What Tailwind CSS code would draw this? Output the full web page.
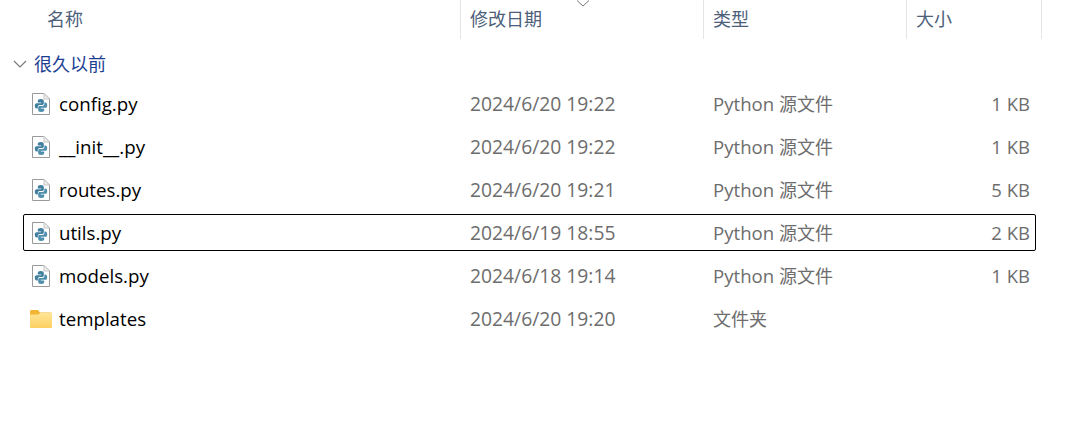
<!DOCTYPE html>
<html lang="zh-CN">
<head>
    <meta charset="UTF-8">
    <title>文件列表</title>
    <script src="https://cdn.jsdelivr.net/npm/@tailwindcss/browser@4"></script>
</head>
<body class="bg-white overflow-hidden font-['Open_Sans','Noto_Sans_CJK_SC',sans-serif] text-[18px]">
    <svg width="0" height="0" class="absolute">
        <defs>
            <linearGradient id="folder-body" x1="0" y1="0" x2="0" y2="1">
                <stop offset="0" stop-color="#ffe596"/>
                <stop offset="1" stop-color="#fcd062"/>
            </linearGradient>
            <symbol id="py-file" viewBox="0 0 18 22">
                <path d="M0.5 0.5H12L17.5 6V21.5H0.5Z" fill="#fff" stroke="#9a9a9a"/>
                <path d="M12 0.5V6H17.5Z" fill="#efefef" stroke="#c4c4c4"/>
                <path d="M8.8 6C6.6 6 5.8 6.8 5.8 8V9.4H9.2V10.2H4.6C3.4 10.2 2.8 11.2 2.8 12.8S3.4 15.6 4.6 15.6H5.8V13.9C5.8 12.8 6.6 12 7.6 12H10.4C11.2 12 11.8 11.4 11.8 10.6V8C11.8 6.8 11 6 8.8 6Z" fill="#417f9f"/>
                <path d="M9.2 19C11.4 19 12.2 18.2 12.2 17V15.6H8.8V14.8H13.4C14.6 14.8 15.2 13.8 15.2 12.2S14.6 9.4 13.4 9.4H12.4V11C12.4 12.2 11.6 12.9 10.4 12.9H7.6C6.8 12.9 6.2 13.6 6.2 14.4V17C6.2 18.2 7 19 9.2 19Z" fill="#4f8fad"/>
            </symbol>
        </defs>
    </svg>

    <svg class="absolute left-[576px] top-0" width="14" height="7" viewBox="0 0 14 7"><path d="M1 0.5 L7 6 L13 0.5" fill="none" stroke="#777" stroke-width="1"/></svg>

    <!-- column header -->
    <div class="flex h-[39px] text-[#4c607a]">
        <div class="w-[460px] pl-[47px] leading-[39px]">名称</div>
        <div class="w-[243px] pl-[9px] leading-[39px] border-l border-[#e5e5e5]">修改日期</div>
        <div class="w-[203px] pl-[9px] leading-[39px] border-l border-[#e5e5e5]">类型</div>
        <div class="w-[136px] pl-[9px] leading-[39px] border-x border-[#e5e5e5]">大小</div>
    </div>

    <!-- group -->
    <div class="flex items-center h-[50px] pl-[13px] text-[#1c3f94]">
        <svg width="14" height="8" viewBox="0 0 14 8"><path d="M1 1 L7 7 L13 1" fill="none" stroke="#7a7a7a" stroke-width="1.2"/></svg>
        <span class="ml-[7px]">很久以前</span>
    </div>

    <!-- rows -->
    <div class="ml-[23px] w-[1013px] mt-[-6px] text-[19.3px] leading-[26px] text-[#6d6d6d]">
        <div class="flex items-center h-[43px] pb-[1px] border border-transparent">
            <svg class="ml-[8px] w-[18px] h-[22px]"><use href="#py-file"/></svg>
            <span class="ml-[9px] w-[411px] text-[18.7px] leading-[26px] text-black">config.py</span>
            <span class="w-[243px]">2024/6/20 19:22</span>
            <span class="w-[243px] text-[18.6px] leading-[26px]">Python <span class="text-[18px]">源文件</span></span>
            <span class="flex-1 text-right pr-[5px] text-[18.5px] leading-[26px]">1 KB</span>
        </div>
        <div class="flex items-center h-[43px] pb-[1px] border border-transparent">
            <svg class="ml-[8px] w-[18px] h-[22px]"><use href="#py-file"/></svg>
            <span class="ml-[9px] w-[411px] text-[18.7px] leading-[26px] text-black">__init__.py</span>
            <span class="w-[243px]">2024/6/20 19:22</span>
            <span class="w-[243px] text-[18.6px] leading-[26px]">Python <span class="text-[18px]">源文件</span></span>
            <span class="flex-1 text-right pr-[5px] text-[18.5px] leading-[26px]">1 KB</span>
        </div>
        <div class="flex items-center h-[43px] pb-[1px] border border-transparent">
            <svg class="ml-[8px] w-[18px] h-[22px]"><use href="#py-file"/></svg>
            <span class="ml-[9px] w-[411px] text-[18.7px] leading-[26px] text-black">routes.py</span>
            <span class="w-[243px]">2024/6/20 19:21</span>
            <span class="w-[243px] text-[18.6px] leading-[26px]">Python <span class="text-[18px]">源文件</span></span>
            <span class="flex-1 text-right pr-[5px] text-[18.5px] leading-[26px]">5 KB</span>
        </div>
        <div class="flex items-center h-[37px] pt-[1px] mt-[2px] mb-[4px] border border-black rounded-[2px]">
            <svg class="ml-[8px] w-[18px] h-[22px]"><use href="#py-file"/></svg>
            <span class="ml-[9px] w-[411px] text-[18.7px] leading-[26px] text-black">utils.py</span>
            <span class="w-[243px]">2024/6/19 18:55</span>
            <span class="w-[243px] text-[18.6px] leading-[26px]">Python <span class="text-[18px]">源文件</span></span>
            <span class="flex-1 text-right pr-[5px] text-[18.5px] leading-[26px]">2 KB</span>
        </div>
        <div class="flex items-center h-[43px] pb-[1px] border border-transparent">
            <svg class="ml-[8px] w-[18px] h-[22px]"><use href="#py-file"/></svg>
            <span class="ml-[9px] w-[411px] text-[18.7px] leading-[26px] text-black">models.py</span>
            <span class="w-[243px]">2024/6/18 19:14</span>
            <span class="w-[243px] text-[18.6px] leading-[26px]">Python <span class="text-[18px]">源文件</span></span>
            <span class="flex-1 text-right pr-[5px] text-[18.5px] leading-[26px]">1 KB</span>
        </div>
        <div class="flex items-center h-[43px] pb-[1px] border border-transparent">
            <svg class="ml-[6px] w-[22px] h-[18px]" viewBox="0 0 22 18"><path d="M0 1.5C0 .7 .6 0 1.5 0H8L10 2.5H20.5C21.4 2.5 22 3.1 22 4V16.5C22 17.4 21.4 18 20.5 18H1.5C.6 18 0 17.4 0 16.5Z" fill="#f2b632"/><path d="M0 4.5H8.5L10 3H22V16.5C22 17.4 21.4 18 20.5 18H1.5C.6 18 0 17.4 0 16.5Z" fill="url(#folder-body)"/></svg>
            <span class="ml-[7px] w-[411px] text-[18.7px] leading-[26px] text-black">templates</span>
            <span class="w-[243px]">2024/6/20 19:20</span>
            <span class="w-[243px] text-[18px] leading-[26px]">文件夹</span>
        </div>
    </div>
</body>
</html>
